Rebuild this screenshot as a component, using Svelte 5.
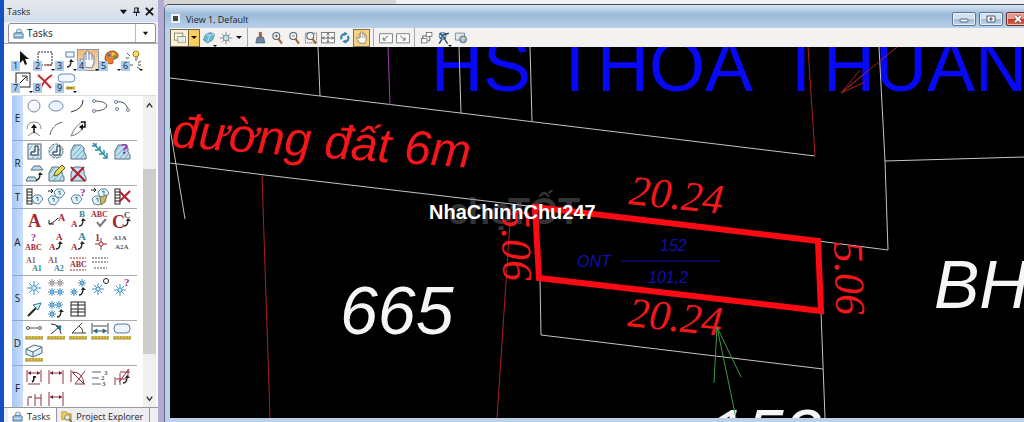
<script lang="ts">
  type Tool = { name: string; art: string };
  type Group = { key: string; tools: Tool[] };

  // small drawing helpers, all icons live on a 20x20 grid
  const path = (d: string, color = '#333', width = 1, fill = 'none') =>
    `<path d="${d}" fill="${fill}" stroke="${color}" stroke-width="${width}"/>`;
  const label = (x: number, y: number, text: string, size = 9, color = '#a32a32') =>
    `<text x="${x}" y="${y}" font-family="Liberation Serif, serif" font-weight="bold" font-size="${size}" fill="${color}">${text}</text>`;
  const star = (x: number, y: number, r: number, color = '#3f8fc4') => {
    const s = Math.round(r * 7) / 10;
    return (
      path(
        `M${x - r} ${y}h${2 * r}M${x} ${y - r}v${2 * r}M${x - s} ${y - s}l${2 * s} ${2 * s}M${x + s} ${y - s}l${-2 * s} ${2 * s}`,
        color
      ) + `<circle cx="${x}" cy="${y}" r="${r / 3}" fill="#e4f4ff" stroke="${color}"/>`
    );
  };
  const hook = (x: number, y: number) =>
    path(`M${x} ${y}q4 0 4-6`, '#222', 1.3) + path(`M${x + 2} ${y - 5}l2-3 3 3z`, '#222', 0, '#222');
  const ruler =
    '<rect x="1" y="14" width="18" height="3" fill="#e3c94e"/>' +
    path('M1 17h18M3 14v2M6 14v2M9 14v2M12 14v2M15 14v2M18 14v2', '#9c8534');
  const hand =
    'M6 17L2 10q0-2 2-1l2 2V4q1-2 2 0V2q2-2 3 0v2q2-2 3 0v2q2-1 2 1v6l-2 5z';
  const region = 'M3 17V9l3-6h7l3 3v4l2 3v4z';
  const cross = path('M3 3l14 14M16 3L3 17', '#b3202c', 2);
  const shade = path('M4 9l4-5M5 14l8-9M8 16l8-9M13 16l4-5', '#6ba9c0');
  const tag = (x: number, y: number) =>
    path(`M${x} ${y + 3}l3-3h5l3 4-4 5-5-1z`, '#58839c', 1, '#e8f5fb') +
    path(`M${x + 4} ${y + 3}l2-1v4`, '#287ea8');

  const mainTools: Tool[] = [
    { name: 'Element Selection', art: path('M8 1v12l3-3 2 5 2-1-2-5h4z', '#111', 0, '#111') },
    {
      name: 'Place Fence',
      art: '<rect x="4" y="2" width="14" height="13" fill="none" stroke="#222" stroke-dasharray="2 1"/>' + path('M12 15h6', '#a33')
    },
    {
      name: 'Manipulate',
      art: '<rect x="10" y="2" width="8" height="5" fill="#eef6ff" stroke="#5f83ae"/>' + hook(11, 17)
    },
    { name: 'View Control', art: path(hand, '#6e83a5', 1, '#f7faff') + path('M8 4v6M11 4v6M14 6v4', '#6e83a5') },
    {
      name: 'Change Attributes',
      art:
        path('M5 9q0-8 8-8 6 1 5 6-1 2-4 2-2 1-1 4-5 3-8-4z', '#a94d1b', 1, '#df812e') +
        '<circle cx="9" cy="5" r="1.5" fill="#3f75bd"/><circle cx="13" cy="4" r="1.5" fill="#e9d653"/><circle cx="15" cy="7" r="1.5" fill="#4d9d47"/>'
    },
    {
      name: 'Groups',
      art:
        '<circle cx="14" cy="4" r="3" fill="#f7df64" stroke="#a48a24"/>' +
        path('M13 8h3M13 10h2M5 3l3 3M4 8h3M8 15h3M16 13l3-2M16 15h3M15 17l3 2', '#555')
    },
    { name: 'Modify', art: '<rect x="4" y="1" width="14" height="14" fill="none" stroke="#222"/>' + path('M8 11l6-6M10 4h5v5', '#222') },
    { name: 'Delete Element', art: path('M4 3q6 5 13 13M18 3Q10 8 6 17', '#c72531', 2) },
    {
      name: 'Measure',
      art: '<rect x="2" y="2" width="17" height="8" rx="4" fill="#f4f8ff" stroke="#6b8ac0"/>' + path('M10 16h9', '#caa936', 3) + path('M12 15v2M15 15v2', '#695412')
    }
  ];

  const groups: Group[] = [
    {
      key: 'E',
      tools: [
        { name: 'Place Circle', art: '<circle cx="10" cy="9" r="6" fill="#f7f9ff" stroke="#7486a8"/>' },
        { name: 'Place Ellipse', art: '<ellipse cx="10" cy="9" rx="7" ry="5" fill="#e9f5ff" stroke="#7486a8"/>' },
        { name: 'Place Arc', art: path('M15 3q0 9-12 12') },
        {
          name: 'Place Half Ellipse',
          art: path('M4 4q12 0 13 5-2 5-13 5', '#555') + '<circle cx="4" cy="4" r="1.5" fill="#fff" stroke="#68829c"/><circle cx="4" cy="14" r="1.5" fill="#fff" stroke="#68829c"/>'
        },
        {
          name: 'Place Quarter Ellipse',
          art: path('M4 5q10-2 12 8', '#555') + '<circle cx="4" cy="5" r="1.5" fill="#fff" stroke="#68829c"/><circle cx="16" cy="13" r="1.5" fill="#fff" stroke="#68829c"/><circle cx="5" cy="12" r="1.5" fill="#fff" stroke="#68829c"/>'
        },
        { name: 'Modify Arc Radius', art: path('M3 10q0-7 7-7t7 7M4 17q6-7 12 0', '#888') + path('M10 14V8', '#111', 1.5) + path('M7 9l3-4 3 4z', '#111', 0, '#111') },
        { name: 'Modify Arc Angle', art: '<path d="M4 16Q6 5 17 3" fill="none" stroke="#666" stroke-dasharray="9 1"/>' },
        { name: 'Modify Arc Axis', art: path('M3 17Q7 7 14 3M3 17q8-2 11-7', '#777') + path('M13 3h4v5h-3', '#111', 1.5) + path('M15 5l-4 3 4 3z', '#111', 0, '#111') }
      ]
    },
    {
      key: 'R',
      tools: [
        { name: 'Hatch Area', art: '<rect x="4" y="2" width="13" height="15" fill="#d8edf4" stroke="#567"/>' + shade + path('M14 4v9H7v-3h4V4z', '#223', 1, '#f2fbff') },
        { name: 'Crosshatch Area', art: '<circle cx="10" cy="9" r="7" fill="#d8edf4" stroke="#567" stroke-dasharray="3 1"/>' + shade + path('M14 4v9H7v-3h4V4z', '#223', 1, '#f2fbff') },
        { name: 'Pattern Area', art: path(region, '#536d7c', 1, '#bfe0ee') + shade },
        { name: 'Linear Pattern', art: path('M3 1l14 15M2 4h4V1M5 8h5V4M9 12h5V8M13 16h4v-5', '#2f91a8', 1.5) },
        { name: 'Show Pattern Attributes', art: path(region, '#536d7c', 1, '#bfe0ee') + shade + label(9, 12, '?', 15, '#9a2a9c') },
        { name: 'Match Pattern Attributes', art: path('M7 6l3-4h6l3 4zM2 17l2-4h7l2 4z', '#536d7c', 1, '#bfe0ee') + hook(12, 16) },
        { name: 'Change Pattern', art: path(region, '#536d7c', 1, '#bfe0ee') + shade + path('M8 12l1-4 7-7 3 3-7 7z', '#5d5a1f', 1, '#e5d85a') },
        { name: 'Delete Pattern', art: path(region, '#536d7c', 1, '#bfe0ee') + cross }
      ]
    },
    {
      key: 'T',
      tools: [
        { name: 'Attach Tags', art: '<rect x="3" y="2" width="5" height="15" fill="#fff" stroke="#222"/>' + path('M3 5h5M3 8h5M3 11h5M3 14h5', '#222') + tag(8, 8) },
        { name: 'Edit Tags', art: tag(2, 9) + tag(8, 2) + path('M2 4h5M5 2l2 2-2 2', '#222') },
        { name: 'Review Tags', art: tag(3, 8) + label(12, 9, '?', 11, '#9a2a9c') },
        { name: 'Change Tags', art: tag(2, 9) + tag(8, 2) + path('M1 3h5M4 1l2 2-2 2', '#222') + path('M10 10l7-2-2 7-4 3z', '#80713b', 1, '#c5b777') },
        { name: 'Delete Tags', art: '<rect x="3" y="2" width="5" height="15" fill="#fff" stroke="#222"/>' + path('M3 5h5M3 8h5M3 11h5M3 14h5', '#222') + path('M7 4l11 11M18 4L7 15', '#b3202c', 2) }
      ]
    },
    {
      key: 'A',
      tools: [
        { name: 'Place Text', art: label(4, 17, 'A', 18) },
        { name: 'Place Note', art: path('M3 14q3 0 9-6M3 10v4h5', '#222') + label(12, 11, 'A', 10) },
        { name: 'Edit Text', art: label(11, 7, 'B', 9, '#35879c') + label(3, 17, 'A', 9) + hook(11, 16) },
        { name: 'Spell Checker', art: label(1, 7, 'ABC', 8) + path('M7 12l3 4 6-7', '#777', 2) },
        { name: 'Change Case', art: label(0, 18, 'C', 18) + label(12, 8, 'C', 9, '#555') + hook(12, 16) },
        { name: 'Display Text Attributes', art: label(7, 9, '?', 10, '#9a2a9c') + label(1, 18, 'ABC', 8) },
        { name: 'Match Text Attributes', art: label(10, 8, 'A', 9) + label(3, 18, 'A', 9) + hook(10, 17) },
        { name: 'Change Text Attributes', art: label(10, 8, 'A', 11, '#35879c') + label(3, 18, 'A', 9) + hook(10, 17) },
        { name: 'Place Text Node', art: label(5, 9, '1', 10) + path('M11 6v12M5 12h12', '#a32a32') + '<circle cx="11" cy="12" r="2" fill="#fff" stroke="#a32a32"/>' },
        { name: 'Copy and Increment', art: label(1, 8, 'A1A', 7, '#555') + label(3, 17, 'A2A', 7, '#555') },
        { name: 'Copy Data Field', art: label(2, 9, 'A1', 8, '#8c5560') + label(8, 17, 'A1', 8, '#35879c') },
        { name: 'Increment Data Field', art: label(2, 9, 'A1', 8, '#8c5560') + label(8, 17, 'A2', 8, '#35879c') },
        { name: 'Fill In Field', art: '<path d="M2 4h16M2 16h16" fill="none" stroke="#a32a32" stroke-dasharray="2 1"/>' + label(2, 13, 'ABC', 8) },
        { name: 'Auto Fill Fields', art: '<path d="M2 4h16M2 8h16M4 14h13" fill="none" stroke="#555" stroke-dasharray="2 1"/>' }
      ]
    },
    {
      key: 'S',
      tools: [
        { name: 'Place Active Cell', art: star(10, 11, 7) },
        { name: 'Place Cell Matrix', art: star(6, 6, 4, '#998b8b') + star(14, 6, 4, '#998b8b') + star(6, 15, 4) + star(14, 15, 4) },
        { name: 'Match Cell', art: star(14, 6, 4) + star(6, 15, 4) + hook(11, 18) },
        { name: 'Define Cell Origin', art: star(8, 12, 6) + '<circle cx="16" cy="4" r="2.5" fill="#fff" stroke="#222"/>' },
        { name: 'Identify Cell', art: star(8, 13, 6) + label(12, 9, '?', 11, '#9a2a9c') },
        { name: 'Place Active Line Terminator', art: path('M4 17l9-9', '#222', 2) + path('M9 6l8-2-3 7z', '#287490', 1, '#d6f0fa') },
        { name: 'Replace Cells', art: star(6, 6, 4) + star(13, 6, 4) + star(6, 15, 4) + hook(11, 18) },
        { name: 'Place Table', art: '<rect x="3" y="3" width="14" height="14" fill="#fff" stroke="#222"/>' + path('M3 6h14M3 10h14M3 13h14M10 3v14', '#222') }
      ]
    },
    {
      key: 'D',
      tools: [
        { name: 'Measure Distance', art: path('M5 6h11', '#555') + '<circle cx="4" cy="6" r="1.5" fill="#fff" stroke="#555"/><circle cx="16" cy="6" r="1.5" fill="#fff" stroke="#555"/>' + ruler },
        { name: 'Measure Radius', art: path('M5 2q9 0 10 10M5 12l8-7', '#333') + path('M10 4l5 0-1 4z', '#286a93', 1, '#286a93') + ruler },
        { name: 'Measure Angle', art: path('M14 1L4 11h14M11 4q4 2 4 7', '#444') + ruler },
        { name: 'Measure Length', art: path('M2 1v11M18 1v11M3 4h14M3 9h14', '#444') + path('M4 9l3-2v4zM16 9l-3-2v4z', '#286a93', 1, '#286a93') + ruler },
        { name: 'Measure Area', art: '<rect x="2" y="2" width="16" height="9" rx="4" fill="#edf5ff" stroke="#5b76a5"/>' + ruler },
        { name: 'Measure Volume', art: path('M2 5l8-4 8 2v6l-9 4-7-3zM2 5l7 3 9-5M9 8v5', '#526b7d', 1, '#e0f0fa') + ruler }
      ]
    },
    {
      key: 'F',
      tools: [
        { name: 'Dimension Element', art: path('M3 3v12M17 3v12M4 6h12M4 17h12', '#8d3440') + path('M4 6l3-2v4zM16 6l-3-2v4z', '#6b2630', 0, '#6b2630') + path('M10 9v2q0 3-2 4M9 10h3', '#111', 1.5) },
        { name: 'Linear Dimension', art: path('M3 3v14M17 3v14M4 6h12', '#8d3440') + path('M4 6l3-2v4zM16 6l-3-2v4z', '#6b2630', 0, '#6b2630') },
        { name: 'Angular Dimension', art: path('M3 3v12M7 17L17 4M4 5q11 0 12 12M7 17h10M4 5l12 12', '#8d3440') },
        { name: 'Ordinate Dimension', art: path('M2 5h9M2 11h7M2 17h9', '#666') + label(14, 8, '3', 7, '#555') + label(11, 13, '2', 7, '#555') + label(12, 19, '3', 7, '#555') },
        { name: 'Change Dimension', art: path('M3 18V10M8 18V6M16 10V2M4 12h10M8 5h10M7 15l10-13', '#8d3440') + hook(11, 16) },
        { name: 'Dimension Size', art: path('M4 17V9M11 17V5M17 17V5M11 9h6', '#8d3440') + path('M4 8h4', '#222') },
        { name: 'Dimension Location', art: path('M3 3v14M17 3v14M4 8h12', '#8d3440') + path('M4 8l3-2v4zM16 8l-3-2v4z', '#6b2630', 0, '#6b2630') }
      ]
    }
  ];

  const lens = '<circle cx="9" cy="7" r="5" fill="#eef6fb" stroke="#56626e" stroke-width="1.5"/>' + path('M12 11l5 7', '#a26b2d', 3);
  const blueSwirl = path('M5 12q-2-6 5-8M14 7q3 6-4 9', '#2f83b5', 3) + path('M9 1l5 3-5 3zM11 12v6l-5-3z', '#2f83b5', 0, '#2f83b5');

  const viewTools: (Tool & { wide?: boolean; active?: boolean; menu?: boolean; split?: boolean })[][] = [
    [
      {
        name: 'View Attributes',
        wide: true,
        art: '<rect x="2" y="3" width="12" height="10" fill="#fff8d8" stroke="#666"/><rect x="7" y="8" width="11" height="8" fill="#fff" stroke="#777"/>' + path('M9 10h7M9 13h7', '#bbb')
      },
      { name: 'Display Style', menu: true, art: path('M2 13l3-8 7-3 6 3-3 8-7 4z', '#3d7f96', 1, '#6db7cc') + path('M5 5l6 1 7-1M11 6l-3 10', '#d1f0f7') },
      { name: 'Adjust View Brightness', split: true, art: path('M10 1v18M1 10h18M4 4l12 12M16 4L4 16', '#5c6b74') + '<circle cx="10" cy="10" r="4" fill="#c6e2e7" stroke="#56707a"/>' }
    ],
    [
      { name: 'Update View', art: path('M9 2h3v7H9z', '#77412d', 1, '#b56b4d') + path('M6 9h9l2 8H4z', '#3b556d', 1, '#6d88a4') },
      { name: 'Zoom In', art: lens + path('M7 7h4M9 5v4') },
      { name: 'Zoom Out', art: lens + path('M7 7h4') },
      { name: 'Window Area', art: '<rect x="2" y="3" width="16" height="14" fill="none" stroke="#444" stroke-dasharray="2 1"/>' + lens },
      { name: 'Fit View', art: '<rect x="1" y="2" width="18" height="15" fill="#fff" stroke="#444"/>' + path('M10 3v13M2 10h16M8 5l2-2 2 2M8 14l2 2 2-2M5 8l-3 2 3 2M15 8l3 2-3 2') },
      { name: 'Rotate View', art: blueSwirl },
      { name: 'Pan View', active: true, art: path(hand, '#5d6678', 1, '#fffaf0') + path('M8 4v6M11 4v6M14 6v4', '#8b8170') }
    ],
    [
      { name: 'View Previous', art: '<rect x="1" y="4" width="18" height="13" fill="#fff" stroke="#555"/>' + path('M13 7l-6 5M6 9v4h4') },
      { name: 'View Next', art: '<rect x="1" y="4" width="18" height="13" fill="#fff" stroke="#555"/>' + path('M6 7l6 5M13 9v4H9') }
    ],
    [
      { name: 'Copy View', art: '<rect x="9" y="2" width="8" height="6" fill="#fff" stroke="#555"/><rect x="2" y="11" width="8" height="6" fill="#fff" stroke="#555"/>' + path('M4 11V7h5M14 8v6h-3') },
      { name: 'Change View Perspective', menu: true, art: '<circle cx="8" cy="7" r="5" fill="#a9cfe6" stroke="#35638b"/>' + path('M4 3l8 8M12 3l-7 8M7 12l-4 6M10 10l5 8M12 5l5-2', '#26466a', 2) },
      { name: 'Clip Volume', art: path('M2 3h13v10H2z', '#5b6c77', 1, '#dceaf0') + '<circle cx="13" cy="12" r="5" fill="#9aafb8" stroke="#465760"/>' + path('M10 11h6M13 9v6', '#eef') }
    ]
  ];
</script>

{#snippet icon(art: string)}
  <svg viewBox="0 0 20 20" aria-hidden="true">{@html art}</svg>
{/snippet}

{#snippet toolbox()}
  <svg class="toolbox" viewBox="0 0 12 12" aria-hidden="true">
    <path d="M4 5V2l3-1 2 1v3" fill="#dbeaf6" stroke="#6f93b5" />
    <path d="M1 6l2-1h7l1 1v5H1z" fill="#8db6d8" stroke="#58809f" />
    <path d="M2 8h8" stroke="#e8f4fc" />
  </svg>
{/snippet}

<div class="desktop">
  <aside class="tasks">
    <header class="tasks-header">
      <h2>Tasks</h2>
      <button type="button" aria-label="Panel menu">
        <svg viewBox="0 0 10 10"><path d="M1 3h8L5 8z" fill="#111" /></svg>
      </button>
      <button type="button" aria-label="Pin panel">
        <svg viewBox="0 0 10 10"><path d="M3 1h4v5H3zM1 6h8M5 6v4M6 1v5" fill="none" stroke="#111" /></svg>
      </button>
      <button type="button" aria-label="Close panel">
        <svg viewBox="0 0 10 10"><path d="M1 1l8 8M9 1L1 9" stroke="#111" stroke-width="2" /></svg>
      </button>
    </header>

    <div class="task-picker">
      {@render toolbox()}
      <select aria-label="Active task">
        <option>Tasks</option>
      </select>
      <svg class="picker-arrow" viewBox="0 0 8 8" aria-hidden="true"><path d="M1 2h6L4 6z" fill="#111" /></svg>
    </div>

    <div class="tasks-body">
      <div class="main-tools">
        {#each mainTools as tool, i}
          <button type="button" class="tool" class:selected={i === 3} aria-label={tool.name}>
            {@render icon(tool.art)}
            <span class="shortcut">{i + 1}</span>
            {#if i !== 0 && i !== 7}<span class="more"></span>{/if}
          </button>
        {/each}
      </div>

      <div class="groups">
        <div class="group-list">
          {#each groups as group}
            <section class="group">
              <h3>{group.key}</h3>
              <div class="group-tools">
                {#each group.tools as tool}
                  <button type="button" class="tool" aria-label={tool.name}>{@render icon(tool.art)}</button>
                {/each}
              </div>
            </section>
          {/each}
        </div>
        <div class="scrollbar">
          <button type="button" aria-label="Scroll up">
            <svg viewBox="0 0 10 10"><path d="M2 7l3-4 3 4" fill="none" stroke="#333" stroke-width="1.5" /></svg>
          </button>
          <div class="track"><div class="thumb"></div></div>
          <button type="button" aria-label="Scroll down">
            <svg viewBox="0 0 10 10"><path d="M2 3l3 4 3-4" fill="none" stroke="#333" stroke-width="1.5" /></svg>
          </button>
        </div>
      </div>
    </div>

    <nav class="tabs">
      <button type="button" class="tab current">{@render toolbox()}Tasks</button>
      <button type="button" class="tab">
        <svg class="toolbox" viewBox="0 0 12 12" aria-hidden="true">
          <path d="M1 1h5l1 2h4v6H1z" fill="#f1d55a" stroke="#b1922b" />
          <circle cx="7" cy="7" r="3" fill="#dcecf7" stroke="#8a7a4a" />
          <path d="M9 9l3 3" stroke="#8a6a2a" stroke-width="2" />
        </svg>
        Project Explorer
      </button>
    </nav>
  </aside>

  <main class="workspace">
    <div class="window">
      <header class="title-bar">
        <span class="window-icon"></span>
        <h1>View 1, Default</h1>
        <button type="button" class="window-button" aria-label="Minimize">
          <svg viewBox="0 0 12 8"><rect x="2" y="4" width="8" height="3" rx="1" fill="#fff" stroke="#4c5a6c" /></svg>
        </button>
        <button type="button" class="window-button" aria-label="Maximize">
          <svg viewBox="0 0 12 8"><path d="M2 1h8v6H2z" fill="#fff" stroke="#4c5a6c" /><path d="M5 3h2v2H5z" fill="#9bb" stroke="#4c5a6c" /></svg>
        </button>
        <button type="button" class="window-button close" aria-label="Close">
          <svg viewBox="0 0 12 8"><path d="M3 1l6 6M9 1L3 7" stroke="#6d2a2a" stroke-width="3" /><path d="M3 1l6 6M9 1L3 7" stroke="#fff" stroke-width="2" /></svg>
        </button>
      </header>

      <div class="view-toolbar">
        {#each viewTools as section}
          <div class="section">
            {#each section as tool}
              <button type="button" class="view-tool" class:wide={tool.wide} class:active={tool.active} class:split={tool.split} aria-label={tool.name}>
                {@render icon(tool.art)}
                {#if tool.wide || tool.split}<span class="drop"></span>{/if}
                {#if tool.menu}<span class="more"></span>{/if}
              </button>
            {/each}
          </div>
        {/each}
      </div>

      <svg class="drawing" viewBox="170 47 854 371" preserveAspectRatio="xMinYMin slice" role="img" aria-label="Parcel map">
        <g class="road-label"><text x="431" y="91">HS</text><text x="553" y="91">THOA</text><text x="779" y="91">THUAN</text></g>

        <g class="boundary">
          <path d="M170 78L320 96L815 156M318 47L320 96M459 47L461 113M530 47L532 121" />
          <path d="M170 163L265 175L537 207M170 128L185 219" />
          <path d="M818 241L888 250L885 161L879 47M885 161L1024 157" />
          <path d="M540 280L541 335L823 369M821 312L825 418" />
        </g>
        <path class="purple" d="M388 47L390 105" />
        <g class="red-line">
          <path d="M808 47L815 156M262 175L270 418M511 207L497 418" />
          <path d="M897 47L841 93L860 70M841 93L864 74M841 93L865 82" />
        </g>

        <text class="street" transform="translate(171 147) rotate(4)">đường đất 6m</text>
        <text class="plot" x="340" y="334">665</text>
        <text class="plot" x="934" y="308">BH</text>
        <text class="plot" x="708" y="457">153</text>

        <g class="watermark"><text x="448" y="224">chợ</text><text x="508" y="224">TỐT</text></g>

        <path class="parcel" d="M535 207L818 241L821 311L539 278z" />
        <g class="length">
          <text transform="translate(628 204) rotate(6)">20.24</text>
          <text transform="translate(627 326) rotate(6)">20.24</text>
          <text transform="translate(834 242) rotate(88)">5.06</text>
          <text transform="translate(501 208) rotate(88)">5.06</text>
        </g>
        <g class="parcel-info">
          <text x="577" y="267">ONT</text>
          <text x="660" y="251">152</text>
          <text x="648" y="283">101,2</text>
          <path d="M621 261H720" />
        </g>
        <path class="green-line" d="M714 383L717 327L741 377M717 327L736 418" />
        <text class="brand" x="429" y="219">NhaChinhChu247</text>
      </svg>
    </div>
  </main>
</div>

<style>
  :global(body) {
    background: #b3a9d4;
  }
  .desktop {
    display: flex;
    height: 100vh;
    overflow: hidden;
    border-left: 4px solid #1450c4;
    box-sizing: border-box;
    font-family: 'Open Sans', 'Noto Sans', sans-serif;
    font-size: 9px;
    color: #222;
  }
  h1,
  h2,
  h3 {
    margin: 0;
    font-size: inherit;
    font-weight: 400;
  }
  button {
    padding: 0;
    border: 0;
    background: none;
    font: inherit;
    color: inherit;
  }
  svg {
    display: block;
  }

  .tasks {
    display: flex;
    flex-direction: column;
    flex: none;
    width: 154px;
    background: #f1f2f6;
  }
  .tasks-header {
    display: flex;
    align-items: center;
    gap: 2px;
    height: 22px;
    padding: 0 2px 0 3px;
    background: linear-gradient(#e6e8ea, #d3dff0);
  }
  .tasks-header h2 {
    flex: 1;
  }
  .tasks-header button {
    width: 11px;
  }
  .tasks-header button svg {
    width: 9px;
    height: 9px;
  }
  .task-picker {
    display: flex;
    align-items: center;
    height: 18px;
    margin: 1px 2px 0 4px;
    padding-left: 4px;
    border: 1px solid #8e8e94;
    border-radius: 3px 3px 0 0;
    background: #fff;
  }
  .task-picker select {
    flex: 1;
    align-self: stretch;
    padding: 0 3px;
    border: 0;
    border-right: 1px solid #bbb;
    appearance: none;
    background: none;
    font: inherit;
    font-size: 10px;
    color: inherit;
  }
  .picker-arrow {
    width: 7px;
    margin: 0 6px;
  }
  .toolbox {
    width: 11px;
    height: 11px;
  }

  .tasks-body {
    display: flex;
    flex: 1;
    flex-direction: column;
    min-height: 0;
    border-top: 1px solid #aaa;
    background: #fff;
  }
  .main-tools {
    display: grid;
    grid-template-columns: repeat(6, 22px);
    padding: 5px 0 2px 7px;
  }
  .tool {
    position: relative;
    display: grid;
    place-items: center;
    width: 22px;
    height: 22px;
  }
  .tool svg {
    width: 20px;
    height: 20px;
  }
  .tool.selected {
    background: linear-gradient(#f0b878, #fbe2bc);
    box-shadow: inset 0 0 0 1px #8a97ad;
  }
  .shortcut {
    position: absolute;
    left: 0;
    bottom: 0;
    width: 9px;
    height: 10px;
    background: #a9cbf0;
    font-size: 9px;
    line-height: 10px;
    color: #123;
  }
  .more {
    position: absolute;
    right: 0;
    bottom: 0;
    border: 2px solid transparent;
    border-top-color: #111;
    border-bottom: 0;
  }

  .groups {
    display: flex;
    flex: 1;
    min-height: 0;
    margin: 0 2px 0 8px;
    border-top: 1px solid #ddd;
  }
  .group-list {
    flex: 1;
    overflow: hidden;
  }
  .group {
    display: flex;
    margin-right: 6px;
  }
  .group h3 {
    display: grid;
    place-items: center;
    width: 11px;
    border-bottom: 1px solid #8fa9cf;
    background: linear-gradient(90deg, #a9c8f6, #c9defc);
    font-size: 10px;
  }
  .group-tools {
    display: grid;
    flex: 1;
    grid-template-columns: repeat(5, 22px);
    border-bottom: 1px solid #aaa;
  }

  .scrollbar {
    display: flex;
    flex-direction: column;
    width: 13px;
    background: #f0f0f0;
  }
  .scrollbar button {
    display: grid;
    place-items: center;
    height: 18px;
  }
  .scrollbar svg {
    width: 9px;
    height: 9px;
  }
  .track {
    display: grid;
    flex: 1;
    grid-template-rows: 54fr 183fr 35fr;
  }
  .thumb {
    grid-row: 2;
    background: #cdcdcd;
  }

  .tabs {
    display: flex;
    height: 14px;
    padding-left: 4px;
    border-top: 1px solid #999;
    background: #eeeef2;
  }
  .tab {
    display: flex;
    align-items: center;
    gap: 4px;
    padding: 2px 6px 0 4px;
    border-right: 1px solid #999;
    white-space: nowrap;
  }
  .tab.current {
    background: #fff;
  }

  .workspace {
    display: flex;
    flex: 1;
    min-width: 0;
    margin-left: 6px;
    padding-top: 4px;
    background: linear-gradient(90deg, #d8d6d4 232px, #f1f1f1 232px);
  }
  .window {
    display: flex;
    flex: 1;
    flex-direction: column;
    min-width: 0;
    padding: 0 0 4px 5px;
    border-top: 1px solid #424f5e;
    border-left: 1px solid #5b6b80;
    border-radius: 5px 0 0 0;
    background: #b9d1ea;
  }
  .title-bar {
    display: flex;
    align-items: center;
    gap: 3px;
    height: 23px;
    margin: 0 -6px 0 -5px;
    padding-left: 6px;
    border-radius: 4px 0 0 0;
    background: linear-gradient(#dbe8f5, #9ab9d8 40%, #b9d1ea);
  }
  .title-bar h1 {
    flex: 1;
    padding: 5px 0 0 3px;
  }
  .window-icon {
    width: 5px;
    height: 5px;
    margin-top: 4px;
    border: 2px solid #f2f2f2;
    background: #444;
  }
  .window-button {
    display: grid;
    place-items: center;
    width: 24px;
    height: 14px;
    margin-top: 5px;
    border: 1px solid #5f7690;
    border-radius: 2px;
    background: linear-gradient(#d3e2f2 50%, #a3bdd9 50%, #bfd6ec);
    box-shadow: inset 0 0 0 1px #e6f0fa;
  }
  .window-button svg {
    width: 12px;
    height: 8px;
  }
  .window-button.close {
    border-color: #6b2a2a;
    background: linear-gradient(#e39a8c 50%, #b93a28 50%, #d36a52);
    box-shadow: inset 0 0 0 1px #f0b8ac;
  }

  .view-toolbar {
    display: flex;
    height: 19px;
    background: #f3f2f1;
  }
  .section {
    display: flex;
    align-items: center;
  }
  .section + .section {
    margin-left: 3px;
    padding-left: 3px;
    border-left: 1px solid #aaa;
  }
  .view-tool {
    position: relative;
    display: flex;
    align-items: center;
    justify-content: center;
    width: 17px;
    height: 18px;
  }
  .view-tool svg {
    flex: none;
    width: 14px;
    height: 14px;
  }
  .view-tool.wide {
    justify-content: space-between;
    width: 30px;
    padding: 0 2px;
    border: 1px solid #6e6450;
    background: linear-gradient(90deg, #fbf0cf 17px, #6e6450 17px, #6e6450 18px, #f9cf5f 18px);
  }
  .view-tool.split {
    justify-content: space-between;
    width: 27px;
    padding: 0 2px;
  }
  .view-tool.active {
    border: 1px solid #7c7360;
    background: #fbd27c;
  }
  .drop {
    border: 3px solid transparent;
    border-top-color: #111;
    border-bottom: 0;
  }

  .drawing {
    flex: 1;
    width: 100%;
    min-height: 0;
    background: #000;
    font-family: 'Liberation Sans', Arial, sans-serif;
  }
  .drawing path {
    fill: none;
  }
  .boundary {
    stroke: #c4c4c4;
  }
  .purple {
    stroke: #a040a8;
  }
  .red-line {
    stroke: #a82024;
  }
  .green-line {
    stroke: #3c9a48;
  }
  .road-label {
    fill: #0808f8;
    font-size: 72px;
  }
  .street,
  .plot {
    font-family: 'Liberation Sans Narrow', 'Arial Narrow', 'Liberation Sans', sans-serif;
    font-style: italic;
  }
  .street {
    fill: #f5161c;
    font-size: 48px;
  }
  .plot {
    fill: #f6f6f6;
    font-size: 68px;
  }
  .watermark {
    fill: #8a8a8a;
    fill-opacity: 0.4;
    font-size: 36px;
    font-weight: 700;
  }
  .drawing .parcel {
    stroke: #fb0a14;
    stroke-width: 6px;
  }
  .length {
    fill: #f5161c;
    font-family: 'Liberation Serif', 'Times New Roman', serif;
    font-size: 42px;
    font-style: italic;
  }
  .parcel-info {
    fill: #1010a8;
    font-size: 16px;
    font-style: italic;
  }
  .parcel-info path {
    stroke: #1010a8;
  }
  .brand {
    fill: #fff;
    font-size: 20px;
    font-weight: 700;
  }
</style>
